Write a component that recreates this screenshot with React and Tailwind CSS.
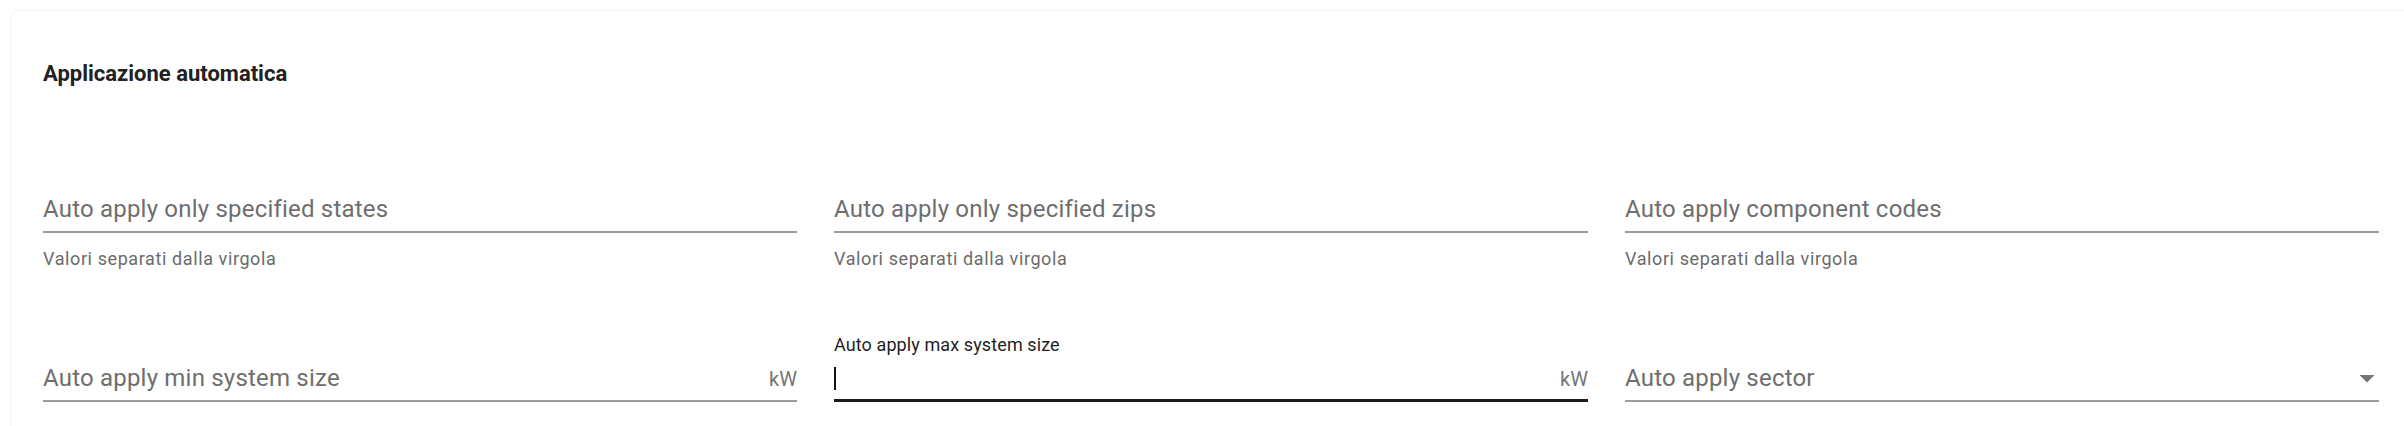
// Auto-apply settings card: three comma-separated filters, then size/sector limits.
const textFields = [
  { id: 'states', label: 'Auto apply only specified states' },
  { id: 'zips', label: 'Auto apply only specified zips' },
  { id: 'codes', label: 'Auto apply component codes' },
];

const helper = 'Valori separati dalla virgola';

const Field = ({ label, focused, unit, select, helperText }) => (
  <div className="flex flex-col">
    {/* shrunk label sits here once the field has focus */}
    <div className="h-[24px] text-[18px] leading-[24px] text-[#1f1f1f] tracking-[0.1px]">
      {focused ? label : ''}
    </div>
    <div
      className={`h-[45px] flex items-start pt-[6px] ${
        focused ? 'border-b-[3px] border-[#1c1c1c]' : 'border-b-2 border-[#9b9b9b]'
      }`}
    >
      <div className="flex-1 flex items-center h-[30px]">
        {focused ? (
          <span className="w-[2px] h-[23px] bg-[#111]" />
        ) : (
          <span className="text-[24px] leading-[30px] text-[#6e6e6e] tracking-[0.2px]">{label}</span>
        )}
      </div>
      {unit && (
        <span className="text-[20px] leading-[30px] text-[#767676] pt-[1px]">{unit}</span>
      )}
      {select && (
        <svg width="36" height="30" viewBox="0 0 24 20" className="text-[#757575] -mr-[6px]">
          <path d="M7 8l5 5 5-5z" fill="currentColor" />
        </svg>
      )}
    </div>
    {helperText && (
      <div className="mt-[14px] text-[18px] leading-[24px] text-[#6b6b6b] tracking-[0.6px]">
        {helperText}
      </div>
    )}
  </div>
);

export default function App() {
  return (
    <div className="w-full min-h-[426px] bg-white overflow-hidden font-['Roboto',sans-serif]">
      <div className="ml-[12px] mt-[11px] w-[2398px] bg-white rounded-[6px] shadow-[0_0_3px_rgba(0,0,0,0.09)] pl-[31px] pr-[31px] pt-[50px] pb-[40px]">
        <h2 className="text-[22px] leading-[26px] font-bold text-[#212121]">Applicazione automatica</h2>

        <div className="mt-[77px] grid grid-cols-3 gap-x-[37px] gap-y-[62px]">
          {textFields.map((f) => (
            <Field key={f.id} label={f.label} helperText={helper} />
          ))}
          <Field label="Auto apply min system size" unit="kW" />
          <Field label="Auto apply max system size" unit="kW" focused />
          <Field label="Auto apply sector" select />
        </div>
      </div>
    </div>
  );
}
